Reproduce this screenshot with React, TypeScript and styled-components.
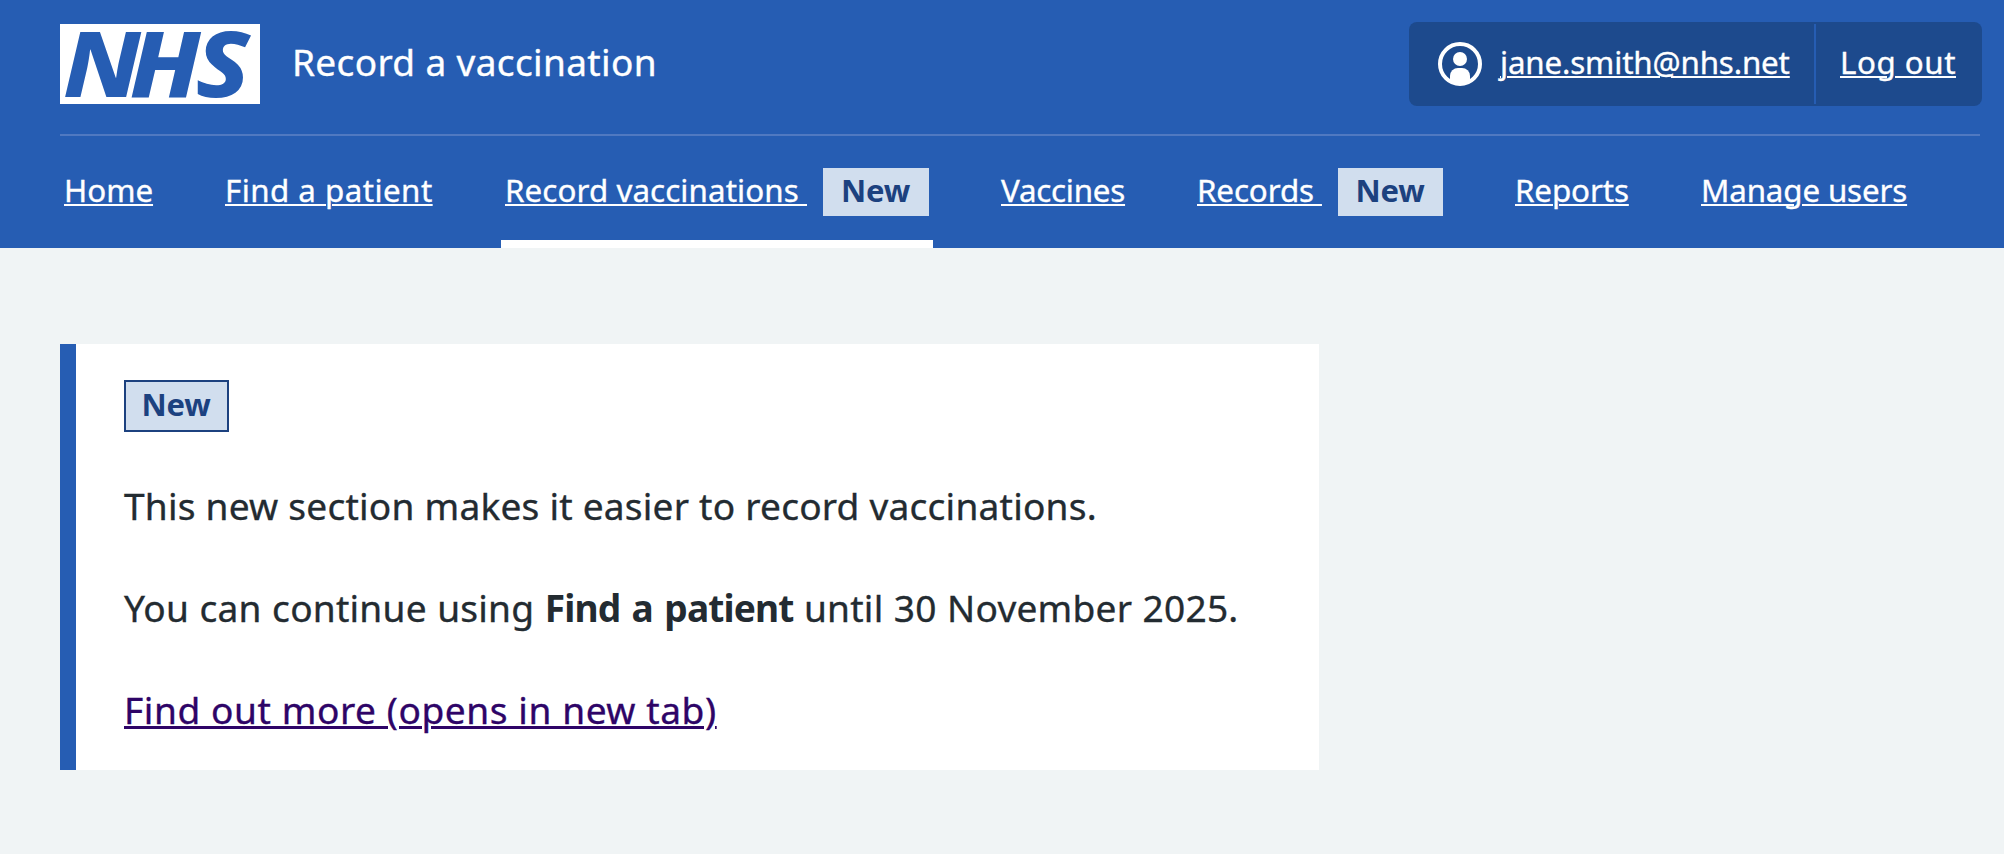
import React from 'react';
import styled, { createGlobalStyle, css } from 'styled-components';

const blue = '#265db3';

const GlobalStyle = createGlobalStyle`
  *, *::before, *::after { box-sizing: border-box; }
  body {
    margin: 0;
    min-height: 100vh;
    background: #f0f4f5;
    color: #232b31;
    font-family: "Noto Sans", "Open Sans", sans-serif;
    -webkit-text-stroke: 0.35px currentColor;
    overflow: hidden;
  }
`;

const Header = styled.header`
  height: 248px;
  padding: 0 24px 0 60px;
  background: ${blue};
  color: #fff;
`;

const Masthead = styled.div`
  display: flex;
  align-items: center;
  height: 136px;
  padding: 22px 0 28px;
  border-bottom: 2px solid #5079c1;
`;

const Logo = styled.svg`
  display: block;
  flex: none;
  width: 200px;
  height: 80px;
  overflow: visible;
  font: italic 800 91.5px "Noto Sans", sans-serif;
  -webkit-text-stroke: 0;
`;

const ServiceName = styled.span`
  margin-left: 32px;
  padding-bottom: 4px;
  font-size: 37px;
  line-height: 48px;
  letter-spacing: 0.36px;
  white-space: nowrap;
`;

const Account = styled.div`
  display: flex;
  align-items: stretch;
  height: 84px;
  width: 573px;
  margin: 0 -2px 0 auto;
  padding: 2px 0;
  border-radius: 8px;
  background: #1d4a8d;
`;

const AccountItem = styled.div<{ $divided?: boolean }>`
  display: flex;
  align-items: center;
  padding-left: ${(p) => (p.$divided ? 24 : 29)}px;
  ${(p) =>
    p.$divided
      ? css`
          flex: 1;
          border-left: 2px solid ${blue};
        `
      : css`
          width: 405px;
        `}
`;

const UserIcon = styled.svg`
  display: block;
  flex: none;
  width: 44px;
  height: 44px;
  margin-right: 18px;
`;

const HeaderLink = styled.a<{ $spacing?: number }>`
  padding-bottom: 4px;
  color: #fff;
  font-size: 31.3px;
  line-height: 44px;
  letter-spacing: ${(p) => p.$spacing ?? 0}px;
  white-space: pre;
  text-decoration: underline;
  text-decoration-thickness: 2px;
  text-underline-offset: 2px;
`;

const Nav = styled.nav`
  display: flex;
  gap: 64px;
  height: 112px;
`;

const NavItem = styled.div<{ $width: number; $current?: boolean }>`
  display: flex;
  align-items: center;
  flex: none;
  gap: 16px;
  width: ${(p) => p.$width}px;
  padding: 0 4px;
  box-shadow: ${(p) => (p.$current ? 'inset 0 -8px 0 #fff' : 'none')};
`;

const Tag = styled.strong<{ $outlined?: boolean }>`
  display: flex;
  justify-content: center;
  flex: ${(p) => (p.$outlined ? 'none' : '1')};
  width: 105px;
  height: ${(p) => (p.$outlined ? 52 : 48)}px;
  padding-right: 1px;
  border: ${(p) => (p.$outlined ? '2px solid #1c417f' : '0')};
  background: #d1deee;
  color: #1c417f;
  font-size: 31px;
  font-weight: 700;
  line-height: ${(p) => (p.$outlined ? 45 : 44)}px;
  letter-spacing: -0.2px;
  -webkit-text-stroke: 0;
`;

const Main = styled.main`
  padding: 96px 60px 0;
`;

const Card = styled.section`
  width: 1259px;
  height: 426px;
  padding: 36px 0 0 48px;
  border-left: 16px solid ${blue};
  background: #fff;
`;

const Paragraph = styled.p<{ $spacing: number; $wordSpacing?: number }>`
  margin: 46px 0 0;
  font-size: 37.1px;
  line-height: 56px;
  letter-spacing: ${(p) => p.$spacing}px;
  word-spacing: ${(p) => p.$wordSpacing ?? 0}px;
  white-space: nowrap;
`;

const Strong = styled.strong`
  letter-spacing: -0.85px;
  word-spacing: 2.6px;
  -webkit-text-stroke: 0;
`;

const VisitedLink = styled.a`
  color: #2e0467;
  text-decoration: underline;
  text-decoration-thickness: 3px;
  text-underline-offset: 2px;
`;

const navItems = [
  { label: 'Home', width: 97, spacing: 0 },
  { label: 'Find a patient', width: 216, spacing: 0.46 },
  { label: 'Record vaccinations', width: 432, spacing: 0.1, isNew: true, current: true },
  { label: 'Vaccines', width: 132, spacing: -0.22 },
  { label: 'Records', width: 254, spacing: -0.1, isNew: true },
  { label: 'Reports', width: 122, spacing: -0.1 },
  { label: 'Manage users', width: 214, spacing: -0.14 },
];

export default function App() {
  return (
    <>
      <GlobalStyle />
      <Header>
        <Masthead>
          <Logo viewBox="0 0 200 80" role="img" aria-label="NHS">
            <rect width="200" height="80" fill="#fff" />
            <text transform="translate(0 72.7) scale(1.1 1)" x="2.7 63.2 123.3" fill={blue}>NHS</text>
          </Logo>
          <ServiceName>Record a vaccination</ServiceName>
          <Account>
            <AccountItem>
              <UserIcon viewBox="0 0 44 44" fill="#fff">
                <circle cx="22" cy="22" r="20" fill="none" stroke="#fff" strokeWidth="4" />
                <circle cx="22" cy="17" r="7" />
                <path d="M12 39V34a8 8 0 0 1 8-8h4a8 8 0 0 1 8 8v5a20 20 0 0 1-20 0z" />
              </UserIcon>
              <HeaderLink $spacing={-0.15}>jane.smith@nhs.net</HeaderLink>
            </AccountItem>
            <AccountItem $divided>
              <HeaderLink $spacing={0.53}>Log out</HeaderLink>
            </AccountItem>
          </Account>
        </Masthead>
        <Nav>
          {navItems.map((item) => (
            <NavItem key={item.label} $width={item.width} $current={item.current}>
              <HeaderLink $spacing={item.spacing}>{item.isNew ? `${item.label} ` : item.label}</HeaderLink>
              {item.isNew && <Tag>New</Tag>}
            </NavItem>
          ))}
        </Nav>
      </Header>
      <Main>
        <Card>
          <Tag $outlined>New</Tag>
          <Paragraph $spacing={0.22}>This new section makes it easier to record vaccinations.</Paragraph>
          <Paragraph $spacing={0.23} $wordSpacing={0.5}>
            You can continue using <Strong>Find a patient</Strong> until 30 November 2025.
          </Paragraph>
          <Paragraph $spacing={0.57}>
            <VisitedLink>Find out more (opens in new tab)</VisitedLink>
          </Paragraph>
        </Card>
      </Main>
    </>
  );
}
